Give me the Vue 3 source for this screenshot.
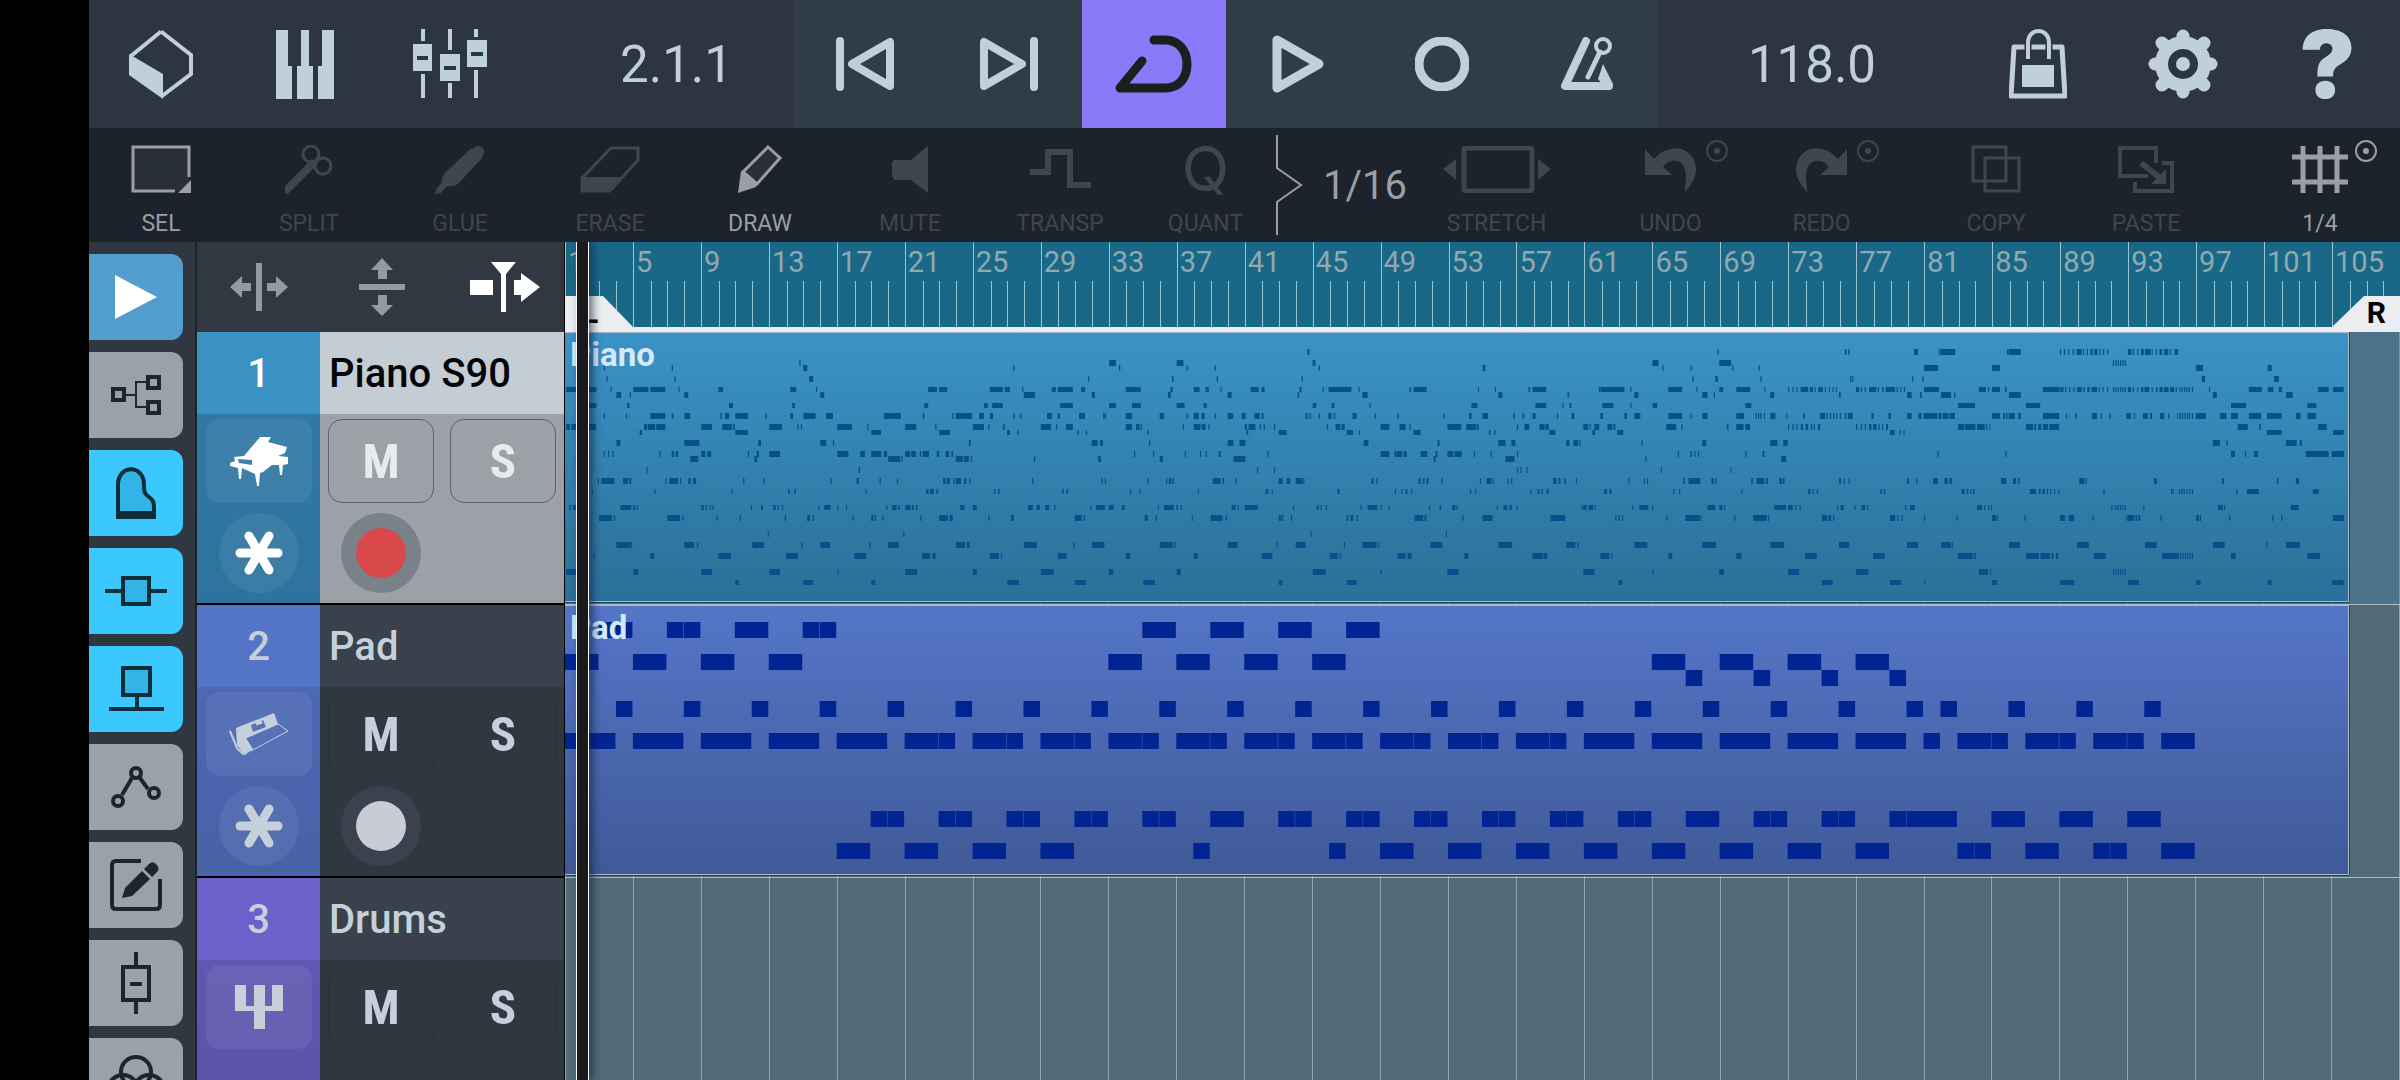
<template>
  <div class="app">
    <!-- Transport bar -->
    <header class="transport">
      <div class="section views">
        <button v-for="view in views" :key="view.icon" class="icon-btn" :aria-label="view.label">
          <Icon :name="view.icon" />
        </button>
      </div>
      <button class="readout position">2.1.1</button>
      <div class="section controls">
        <button
          v-for="control in controls"
          :key="control.icon"
          class="icon-btn"
          :class="{ on: control.icon === 'cycle' && cycle }"
          :aria-label="control.label"
          @click="control.icon === 'cycle' && (cycle = !cycle)"
        >
          <Icon :name="control.icon" />
        </button>
      </div>
      <button class="readout">118.0</button>
      <div class="section views">
        <button class="icon-btn" aria-label="Shop"><Icon name="bag" /></button>
        <button class="icon-btn" aria-label="Setup"><Icon name="gear" /></button>
        <button class="icon-btn help">?</button>
      </div>
    </header>

    <!-- Edit tools -->
    <nav class="tools">
      <template v-for="tool in tools" :key="tool.label">
        <button class="tool" :class="{ enabled: tool.enabled }">
          <span class="tool-icon">
            <span v-if="tool.letter" class="letter">{{ tool.letter }}</span>
            <Icon v-else :name="tool.icon" />
          </span>
          <span>{{ tool.label }}</span>
          <Icon v-if="tool.menu" name="more" class="more" />
        </button>
        <button v-if="tool.letter" class="quant-value">
          <svg class="notch" width="27" height="100" viewBox="0 0 27 100">
            <path d="M1 0V33L25 50L1 67V100" fill="none" stroke="currentColor" stroke-width="2" />
          </svg>
          1/16
        </button>
        <span v-if="tool.gap"></span>
      </template>
    </nav>

    <main class="workspace">
      <!-- Inspector rail -->
      <aside class="rail">
        <button
          v-for="item in rail"
          :key="item.icon"
          class="rail-btn"
          :class="item.state"
          :aria-label="item.label"
        >
          <Icon :name="item.icon" />
        </button>
      </aside>

      <!-- Track list -->
      <section class="track-list">
        <div class="list-head">
          <button class="icon-btn" aria-label="Zoom width"><Icon name="splitH" /></button>
          <button class="icon-btn" aria-label="Zoom height"><Icon name="splitV" /></button>
          <button class="icon-btn follow" aria-label="Autoscroll"><Icon name="follow" /></button>
        </div>
        <article
          v-for="(track, i) in tracks"
          :key="track.name"
          class="track"
          :class="[track.color, { selected: i === 0 }]"
        >
          <div class="number">{{ i + 1 }}</div>
          <h2 class="name">{{ track.name }}</h2>
          <div class="instrument">
            <button class="pill" aria-label="Instrument"><Icon :name="track.icon" /></button>
            <button v-if="track.clip" class="disc" aria-label="Freeze"><Icon name="freeze" /></button>
          </div>
          <div class="mix">
            <button class="pill letter-btn">M</button>
            <button class="pill letter-btn">S</button>
            <button v-if="track.clip" class="disc rec" aria-label="Record enable">
              <span class="dot"></span>
            </button>
          </div>
        </article>
      </section>

      <!-- Arrangement -->
      <section class="arrange">
        <div class="ruler">
          <div v-for="bar in markers" :key="bar" class="marker">
            <span class="bar-number">{{ bar }}</span>
            <i></i><i></i><i></i>
          </div>
          <div class="locator left">L</div>
          <div class="locator right">R</div>
        </div>
        <div class="lanes">
          <div class="bar-lines">
            <span v-for="bar in markers" :key="bar"></span>
          </div>
          <div
            v-for="(track, i) in tracks"
            :key="track.name"
            class="lane"
            :class="[track.color, { selected: i === 0 }]"
          >
            <div v-if="track.clip" class="clip">
              <svg :viewBox="track.clip.viewBox" preserveAspectRatio="none">
                <path :d="track.clip.path" />
              </svg>
              <span class="clip-name">{{ track.clip.name }}</span>
            </div>
          </div>
        </div>
        <div class="playhead"></div>
      </section>
    </main>
  </div>
</template>

<script setup>
import { h, ref } from 'vue'

const line = (w, rest = '') => `fill="none" stroke="currentColor" stroke-width="${w}" ${rest}`
const round = 'stroke-linecap="round" stroke-linejoin="round"'
const undoPath = '<path d="M0 3V29H27L18 21C24 12 40 11 41 29C41 36 40 41 40 46C47 38 51 31 51 22C49 1 25 -5 9 13Z"'

// name: [width, height, markup]
const icons = {
  cube: [64, 70, `<path d="M32 2.500L62 26V45L33 67M2 27L32 2.500" ${line(4)}/><path d="M0 25L34 45V70L0 46Z"/>`],
  keys: [58, 69, '<path d="M0 0H12V36H16V69H0ZM25 0H33V36H37V69H21V36H25ZM46 0H58V69H42V36H46Z"/>'],
  mixer: [74, 70, '<path d="M8 0h4v12h-4zM8 45h4v24h-4zM35 0h4v21h-4zM35 54h4v15h-4zM61 0h4v8h-4zM61 41h4v28h-4z"/><path fill-rule="evenodd" d="M0 15H19V42H0ZM4 27V31H15V27ZM27 25H47V52H27ZM31 37V41H43V37ZM54 11H74V38H54ZM58 23V27H70V23Z"/>'],
  prev: [58, 54, `<path d="M4 4V50" ${line(8, round)}/><path d="M16 27L54 5V49Z" ${line(8, round)}/>`],
  next: [58, 54, `<path d="M54 4V50" ${line(8, round)}/><path d="M42 27L4 5V49Z" ${line(8, round)}/>`],
  cycle: [77, 58, `<path d="M39 5H50C64 5 72 16 72 29C72 43 64 53 50 53H5L27 26" ${line(9, round)}/>`],
  play: [52, 58, `<path d="M5 5V53L47 29Z" ${line(9, round)}/>`],
  record: [54, 54, `<circle cx="27" cy="27" r="23" ${line(9)}/>`],
  metronome: [54, 54, `<path d="M26 4L5 49H49" ${line(8, round)}/><path d="M49 53L53 47L43 27L38 42L44 49Z"/><path d="M28 40L40 15" ${line(5, round)}/><circle cx="43" cy="9" r="7" ${line(4)}/>`],
  bag: [58, 70, `<path d="M5 18H53L56 67H2Z" ${line(5, round)}/><path d="M13 36H45V58H13Z"/><path d="M19 29V14C19 -2 40 -2 40 14V29" fill="none" stroke="#2d3640" stroke-width="7"/><path d="M19 30V14C19 -2 40 -2 40 14V30" ${line(4)}/>`],
  gear: [70, 70, `<path d="M35 7V63M7 35H63M14 14L56 56M56 14L14 56" ${line(13, round)}/><circle cx="35" cy="35" r="28"/><circle cx="35" cy="35" r="15" fill="#2d3640"/><circle cx="35" cy="35" r="7"/>`],
  select: [60, 48, `<path d="M2 2H58V46H2Z" fill="#282f37"/><path d="M58 32V2H2V46H44" ${line(3)}/><path d="M60 35V48H47Z"/>`],
  split: [48, 49, `<circle cx="26" cy="9" r="8" ${line(3)}/><circle cx="38" cy="21" r="8" ${line(3)}/><path d="M0 41L27 14L33 19L4 48L0 49Z"/>`],
  glue: [50, 49, '<path d="M0 49L2 43L7 37Q6 32 10 28L34 5Q39 3 42 1Q50 1 49 8L47 13L23 39Q18 42 12 41L6 48Z"/>'],
  erase: [60, 47, `<path d="M31 2H58V14L30 45H2V32Z" ${line(3)}/><path d="M2 31H41L30 45H2Z"/>`],
  draw: [44, 48, `<path d="M30 2L42 13L19 39L5 27Z" fill="#282f37" stroke="currentColor" stroke-width="3"/><path d="M3 26L10 29L19 38L18 42L0 48Z"/>`],
  mute: [36, 47, '<path d="M2 14H19L36 0V47L19 34H2L0 30V17Z"/>'],
  transpose: [61, 42, `<path d="M0 24H18V4H40V37H61" ${line(6)}/>`],
  stretch: [108, 47, `<rect x="21" y="2" width="68" height="43" rx="2" ${line(5)}/><path d="M0 23L13 13V34ZM108 23L95 13V34Z"/>`],
  undo: [51, 47, `${undoPath}/>`],
  redo: [51, 47, `${undoPath} transform="matrix(-1 0 0 1 51 0)"/>`],
  copy: [50, 48, `<path d="M2 2H35V36H2ZM14 13H48V46H14Z" ${line(3)}/>`],
  paste: [56, 47, `<path d="M38 17V2H2V30H30" ${line(4)}/><path d="M44 17H54V45H17V36" ${line(4)}/><path d="M23 17L42 32" ${line(6)}/><path d="M48 23V38H33Z"/>`],
  grid: [56, 47, `<path d="M11 0V47M28 0V47M45 0V47M0 11H56M0 36H56" ${line(5)}/>`],
  more: [24, 24, `<circle cx="12" cy="12" r="10" ${line(2)}/><circle cx="12" cy="12" r="3"/>`],
  playSolid: [42, 44, '<path d="M0 0L42 22L0 44Z"/>'],
  routing: [50, 40, `<path d="M2 14H13V25H2ZM37 2H48V13H37ZM37 27H48V38H37Z" ${line(4)}/><path d="M15 20H25M35 7H25V32H35" ${line(2)}/>`],
  grand: [40, 52, `<path d="M2 49V18C2 -3 28 -3 28 18C28 26 29 27 33 30C37 33 38 35 38 40V49Z" fill="#0b2733" fill-opacity="0.12" stroke="currentColor" stroke-width="4"/><path d="M0 44H40V52H0Z"/>`],
  insert: [62, 30, `<path d="M0 15H16M46 15H62" ${line(4)}/><rect x="18" y="2" width="26" height="26" fill="#0b2733" fill-opacity="0.12" stroke="currentColor" stroke-width="4"/>`],
  send: [55, 46, `<rect x="14" y="2" width="27" height="27" fill="#0b2733" fill-opacity="0.12" stroke="currentColor" stroke-width="4"/><path d="M28 30V42M0 43H55" ${line(4)}/>`],
  automation: [50, 42, `<path d="M21 12L11 29M29 12L37 23" ${line(4)}/><circle cx="25" cy="7" r="5" ${line(4)}/><circle cx="7" cy="35" r="5" ${line(4)}/><circle cx="43" cy="27" r="5" ${line(4)}/>`],
  edit: [52, 52, `<path d="M31 2H6Q2 2 2 6V46Q2 50 6 50H46Q50 50 50 46V20" ${line(4)}/><path d="M12 39L15 29L32 12L40 20L22 37ZM34 10L39 5Q43 1 47 6Q50 10 47 13L42 18Z"/>`],
  fader: [30, 62, `<path d="M2 15H28V48H2Z" ${line(4)}/><path d="M15 0V14M15 49V62M9 32H21" ${line(4)}/>`],
  blend: [64, 52, `<circle cx="32" cy="17" r="15" ${line(4)}/><circle cx="19" cy="35" r="15" ${line(4)}/><circle cx="45" cy="35" r="15" ${line(4)}/>`],
  splitH: [58, 48, '<path d="M26 0H32V48H26ZM0 24L12 13V20H21V28H12V35ZM58 24L46 13V20H37V28H46V35Z"/>'],
  splitV: [46, 58, '<path d="M0 26H46V32H0ZM23 0L34 12H28V21H19V12H12ZM23 58L34 47H28V37H19V47H12Z"/>'],
  follow: [70, 50, '<path d="M0 18H23V33H0ZM21 0H46L36 12V50H31V12ZM44 18H51V11L70 25L51 40V33H44Z"/>'],
  concert: [58, 49, '<path fill-rule="evenodd" d="M30 0H41L38 5L57 10L55 16L48 19L58 20V27L53 28L52 38H50L49 28L42 28L33 35L30 36L29 49H27L25 37L12 31L11 42H9L8 31L0 29V26L5 24L4 20L14 19ZM8 22L9 26L22 28V23Z"/>'],
  synth: [60, 42, `<path fill-rule="evenodd" d="M7 15L45 0L49 11L17 25L24 36L16 42L8 32ZM22 12L24 19L37 14L34 7Z"/><path d="M17 25L49 11L59 18L22 38" ${line(1)}/><path d="M1 18L8 35L15 42" ${line(2)}/><path d="M27 11L33 9" ${line(3)}/>`],
  drums: [48, 44, '<path d="M0 0H11V21H19V0H30V21H37V0H48V26H30V44H19V26H0Z"/>'],
  freeze: [48, 44, `<path d="M5 22H43M14 5L34 39M34 5L14 39" ${line(9, round)}/>`]
}

function Icon({ name }) {
  const [width, height, innerHTML] = icons[name]
  return h('svg', { width, height, viewBox: `0 0 ${width} ${height}`, fill: 'currentColor', innerHTML })
}
Icon.props = ['name']

const cycle = ref(true)

const views = [
  { icon: 'cube', label: 'Media' },
  { icon: 'keys', label: 'Keyboard' },
  { icon: 'mixer', label: 'Mixer' }
]

const controls = [
  { icon: 'prev', label: 'Previous' },
  { icon: 'next', label: 'Next' },
  { icon: 'cycle', label: 'Cycle' },
  { icon: 'play', label: 'Play' },
  { icon: 'record', label: 'Record' },
  { icon: 'metronome', label: 'Metronome' }
]

const tools = [
  { icon: 'select', label: 'SEL', enabled: true },
  { icon: 'split', label: 'SPLIT' },
  { icon: 'glue', label: 'GLUE' },
  { icon: 'erase', label: 'ERASE' },
  { icon: 'draw', label: 'DRAW', enabled: true },
  { icon: 'mute', label: 'MUTE' },
  { icon: 'transpose', label: 'TRANSP' },
  { letter: 'Q', label: 'QUANT' },
  { icon: 'stretch', label: 'STRETCH', gap: true },
  { icon: 'undo', label: 'UNDO', menu: true },
  { icon: 'redo', label: 'REDO', menu: true, gap: true },
  { icon: 'copy', label: 'COPY' },
  { icon: 'paste', label: 'PASTE', gap: true },
  { icon: 'grid', label: '1/4', enabled: true, menu: true }
]

const rail = [
  { icon: 'playSolid', label: 'Play', state: 'main' },
  { icon: 'routing', label: 'Routing' },
  { icon: 'grand', label: 'Instrument', state: 'active' },
  { icon: 'insert', label: 'Insert effects', state: 'active' },
  { icon: 'send', label: 'Send effects', state: 'active' },
  { icon: 'automation', label: 'Automation' },
  { icon: 'edit', label: 'Edit' },
  { icon: 'fader', label: 'Channel' },
  { icon: 'blend', label: 'Colors' }
]

// One label every four bars
const markers = Array.from({ length: 27 }, (_, i) => i * 4 + 1)

// Piano notes, as "start:length" in ticks (43 to a bar), by pitch above the lowest note
const pianoParts = [
  {
    offset: -12,
    rows: {
      41: '605:2 1389:17',
      40: '110:2 282:2 615:10 1146:2 1414:2',
      38: '117:2 289:2 630:10 1336:2 1549:2',
      36: '15:76 127:2 185:38 228:38 299:2 400:12 582:15 647:2 931:22 959:20 1087:33 1125:13 1169:2 1244:10 1259:38 1318:10 1431:38 1544:6',
      35: '142:12 176:2 314:10 658:10 1173:28 1345:8 1538:7',
      33: '73:18 169:6 427:10 587:7 921:10 1072:10 1093:27 1265:32 1389:17 1447:22',
      31: '110:2 166:2 228:38 282:4 314:15 405:4 417:10 443:32 519:2 582:7 615:31 673:17 819:43 917:4 992:3 1001:41 1060:12 1087:8 1146:2 1164:2 1232:12 1259:5 1313:15 1374:2 1378:2 1431:16 1517:11',
      29: '15:10 28:12 72:18 212:8 222:18 243:23 357:27 410:25 438:4 529:32 600:2 609:2 701:37 777:2 873:28 949:3 1044:28 1083:2 1121:4 1216:26 1255:2 1280:17 1431:16 1457:9 1469:3',
      28: '201:6 443:32 787:25 959:27 1131:7 1157:2 1309:3 1330:2 1486:2',
      26: '142:10 314:38 501:7 658:15 690:2 1034:5 1345:15 1366:7 1490:2',
      24: '110:2 121:2 132:2 251:2 282:6 292:6 357:10 372:10 475:2 497:6 529:27 701:28 759:12 787:25 819:8 873:12 888:12 910:3 917:16 953:6 975:9 990:4 1452:2 1500:2',
      23: '329:20 491:7 830:30 863:2 1001:18 1021:13 1039:3 1199:2 1361:7 1517:8',
      21: '218:2 755:4',
      19: '95:2 104:33 159:13 175:5 266:2 276:22 303:3 324:6 336:8 463:2 514:2 684:2 750:6 808:3 852:3 969:6 978:8 995:3 1001:13 1022:5 1035:2 1194:2 1369:2 1378:2 1486:2 1533:3 1540:4 1549:4',
      17: '80:3 238:2 433:2 577:4 592:4 772:2 926:6 936:9 952:4 1098:3 1108:4 1270:4 1281:4 1442:2 1465:3',
      14: '23:4 32:8 152:28 184:6 194:3 357:6 368:2 378:2 385:2 482:2 508:5 539:6 550:3 561:2 653:2 668:16 701:2 723:3 825:2 840:11 855:4 873:14 890:5 900:4 1012:11 1044:10 1184:12 1205:9 1227:10 1250:2 1341:2 1356:22 1388:12 1421:7 1512:3 1528:25',
      12: '98:33 136:3 271:32 309:2 395:2 454:2 568:2 625:7 639:3 739:2 787:6 796:3 815:2 911:2 959:22 985:8 1083:2 1141:7 1302:18 1325:3 1479:8 1507:3',
      9: '525:2 868:2',
      7: '142:36 179:3 314:25 346:3 486:30 610:2 658:25 782:2 830:27 1001:23 1029:7 1173:33 1298:2 1345:32 1517:33',
      5: '84:2 228:10 400:32 572:30 744:30 916:20 942:8 1087:23 1115:3 1259:22 1431:11',
      2: '15:25 185:12 357:27 529:27 701:2 873:30 1044:10 1216:33 1388:11',
      0: '443:9 615:25 787:10 1131:30 1302:28 1475:30'
    }
  },
  {
    offset: 1530,
    rows: {
      43: '349:5 1386:2',
      41: '18:17 362:7 1222:15 1391:30',
      40: '43:2 114:2 377:2 792:7 1247:2 1318:2 1424:2 1490:2',
      38: '6:2 119:2 334:2 1323:2 1381:6 1495:2',
      36: '2:6 61:15 91:8 129:2 205:20 233:7 329:5 387:2 402:58 478:3 607:4 617:33 780:2 823:2 908:4 918:35 1086:2 1090:61 1166:2 1262:35 1333:2 1391:10 1434:35 1505:2',
      35: '0:3 147:10 324:4 488:13 832:10 1007:4 1176:10 1348:13 1377:3 1520:10',
      33: '18:20 86:8 362:9 410:7 506:2 764:15 926:27 994:2 1012:5 1095:28 1166:2 1222:12 1457:15',
      31: '43:2 61:13 81:8 114:2 147:14 182:10 215:13 233:5 344:5 354:2 377:2 402:8 415:4 463:10 519:2 577:2 693:2 758:6 792:14 870:4 893:4 918:8 980:2 1017:7 1090:7 1151:6 1176:15 1262:35 1318:2 1348:13 1434:20 1483:3 1489:3 1495:2 1504:2 1520:13',
      29: '33:2 61:17 81:10 98:2 190:6 200:17 228:2 238:2 264:2 398:3 420:12 435:8 534:22 582:15 607:2 703:35 751:25 778:4 879:2 898:12 936:13 951:8 1047:12 1063:3 1075:12 1108:12 1123:5 1257:25 1295:2 1410:4 1434:18 1457:12',
      28: '195:4 276:20 448:16 478:3 617:18 808:4 822:3 961:15 1070:7 1133:15',
      26: '147:14 177:15 491:12 678:5 832:18 865:10 1004:8 1022:12 1037:2 1194:2 1348:10 1520:18 1553:7',
      24: '38:2 77:2 91:3 124:5 248:2 534:22 569:4 574:15 592:8 635:17 673:5 703:15 721:18 770:2 812:2 879:2 1286:2 1318:4 1328:2 1337:2 1457:2 1500:5',
      23: '162:30 668:5 850:23 1204:2 1548:12',
      21: '221:2 264:2 879:2 888:2 903:2 1243:2 1419:2',
      19: '0:4 7:3 109:20 134:4 167:2 276:10 296:9 319:17 338:3 511:5 523:2 630:5 641:4 650:5 688:2 785:2 802:12 817:3 855:2 864:2 971:8 984:5 999:4 1028:2 1161:2 1200:2 1208:2 1300:4 1313:30 1371:6 1381:3 1472:4 1485:20 1509:5 1543:7 1552:4',
      17: '71:2 243:7 258:2 425:5 570:2 586:3 597:5 611:3 760:2 773:3 913:3 931:5 941:4 954:5 1100:7 1113:5 1275:2 1289:2 1447:2',
      14: '0:10 17:4 28:2 157:10 172:3 190:33 312:2 372:5 382:2 395:2 483:3 501:25 534:2 554:2 656:2 683:4 715:8 726:2 828:2 845:10 860:6 878:2 1042:3 1047:8 1060:12 1075:2 1171:2 1189:22 1221:2 1361:20 1391:8 1403:3 1530:30',
      12: '56:2 104:30 142:3 276:7 285:2 307:2 448:4 458:7 473:2 620:22 645:5 741:3 792:25 964:37 1128:3 1136:4 1145:3 1257:2 1305:36 1343:2 1429:2 1477:34 1514:3',
      9: '357:2 699:2',
      7: '0:8 12:3 147:25 271:2 319:25 441:2 488:36 528:3 660:30 832:35 1004:23 1032:2 1176:33 1348:35 1520:35',
      5: '61:10 233:27 405:20 430:3 577:20 602:10 746:10 918:26 946:10 1090:23 1118:2 1262:10 1434:13',
      2: '18:10 362:33 534:2 703:28 1047:28 1222:2 1391:12',
      0: '276:9 448:25 1136:9'
    }
  },
  {
    offset: 3075,
    rows: {
      43: '164:4 172:3 339:10 402:3 406:37 574:3 578:31 708:3 718:2 729:2 740:2 750:13 766:2 776:2 785:6 795:8 808:2 817:2 828:2 880:9 892:2 903:2 913:7 923:14 940:2 951:2 960:7 972:10 986:3 998:9',
      41: '842:2 848:2 854:2 860:2 866:2 872:2',
      40: '364:36 536:20 1052:18 1234:10',
      38: '177:2 182:3 334:2 360:2 1067:8 1250:12',
      36: '20:3 31:2 41:3 52:19 75:8 87:3 96:12 113:2 123:2 132:2 141:2 192:8 204:2 214:2 225:18 247:3 258:4 267:24 295:2 304:2 313:2 364:38 503:18 526:3 536:20 569:4 665:42 709:8 721:3 731:3 742:3 751:12 767:4 777:6 788:14 806:3 816:3 827:3 842:2 848:2 854:2 860:2 866:2 872:2 880:8 892:3 903:3 913:6 922:12 940:3 951:4 960:8 971:12 987:10 1001:3 1010:2 1016:2 1022:2 1028:2 1034:2 1042:2 1085:2 1186:33 1234:14 1262:8 1361:27 1399:27',
      35: '149:4 321:12 354:4 407:25 440:2 579:30 1095:10 1280:17',
      33: '450:43 622:36 1141:38 1334:23',
      31: '15:3 58:4 101:13 118:2 126:2 134:2 142:2 151:2 163:4 171:13 231:6 274:6 321:12 350:8 363:34 400:8 411:15 429:13 536:20 564:4 571:4 578:16 602:7 665:41 723:2 746:4 789:13 811:2 833:2 876:11 895:3 918:12 936:5 961:11 982:2 1005:2 1011:2 1017:2 1023:2 1029:2 1035:2 1042:2 1052:25 1113:16 1141:17 1186:31 1232:37 1305:12 1334:22',
      29: '20:3 31:2 41:3 52:6 64:7 78:2 85:3 96:5 192:3 204:2 214:3 225:6 235:9 249:3 258:3 268:5 450:16 468:26 498:20 521:3 529:2 622:18 643:5 653:8 665:13 681:25 1158:25 1212:4 1361:22',
      28: '278:12 302:3 312:3 1232:37 1399:27',
      26: '10:9 1095:18 1129:2 1280:27 1315:5',
      24: '398:2 570:2 1141:10 1176:3 1199:10 1330:58 1396:31',
      19: '149:5 161:2 173:3 321:5 344:3 387:12 416:8 428:7 559:13 589:8 602:4 757:13 773:3 946:7 1118:5 1257:4 1305:8',
      17: '71:6 82:3 93:3 253:4 262:4 459:8 472:4 481:3 488:4 632:15 655:4 664:6 675:3 683:3 693:3 704:3 818:2 989:2 993:3 1009:2 1015:2 1021:2 1028:2 1035:2 1042:2 1154:3 1181:30 1348:15',
      14: '20:12 38:3 49:2 144:3 153:8 188:2 206:9 220:3 316:3 329:12 498:13 516:3 526:3 533:2 838:2 848:2 854:2 860:2 866:2 872:2 919:3 1108:12 1123:2 1292:20',
      12: '106:13 122:7 134:3 278:13 296:3 307:3 364:2 446:2 536:10 548:3 618:2 708:13 730:14 790:2 876:3 880:16 899:4 906:5 962:2 1052:8 1062:2 1136:2 1245:2 1268:2 1399:28',
      7: '149:26 321:28 407:25 434:3 579:28 751:30 923:30 1095:30 1230:2 1280:35',
      5: '63:30 235:30 450:37 490:5 622:33 659:24 687:5 698:5 794:30 966:43 1012:2 1018:2 1024:2 1030:2 1036:2 1042:2 1141:12 1334:32',
      2: '20:28 192:31 503:23 531:2 842:2 848:2 854:2 860:2 866:2 872:2',
      0: '106:27 278:28 364:2 536:13 708:36 880:28 1052:12 1234:10 1396:30'
    }
  }
]

// Pad notes, as "start-end" in bars
const padRows = {
  14: '2-3 3-4 6-7 7-8 10-12 14-15 15-16 34-36 38-40 42-44 46-48',
  12: '0-2 4-6 8-10 12-14 32-34 36-38 40-42 44-46 64-66 68-70 72-74 76-78',
  11: '66-67 70-71 74-75 78-79',
  9: '3-4 7-8 11-12 15-16 19-20 23-24 27-28 31-32 35-36 39-40 43-44 47-48 51-52 55-56 59-60 63-64 67-68 71-72 75-76 79-80 81-82 85-86 89-90 93-94',
  7: '0-3 4-7 8-11 12-15 16-19 20-22 22-23 24-26 26-27 28-30 30-31 32-34 34-35 36-38 38-39 40-42 42-43 44-46 46-47 48-50 50-51 52-54 54-55 56-58 58-59 60-63 64-67 68-71 72-75 76-79 80-81 82-84 84-85 86-88 88-89 90-92 92-93 94-96',
  2: '18-19 19-20 22-23 23-24 26-27 27-28 30-31 31-32 34-35 35-36 38-40 42-43 43-44 46-47 47-48 50-51 51-52 54-55 55-56 58-59 59-60 62-63 63-64 66-68 70-71 71-72 74-75 75-76 78-79 79-82 84-86 88-90 92-94',
  0: '16-18 20-22 24-26 28-30 37-38 45-46 48-50 52-54 56-58 60-62 64-66 68-70 72-74 76-78 82-83 83-84 86-88 90-91 91-92 94-96'
}

function pianoPath() {
  let d = ''
  for (const { offset, rows } of pianoParts) {
    for (const [pitch, notes] of Object.entries(rows)) {
      const top = 246.7 - pitch * 5.364
      const y = Math.round(top)
      const bottom = Math.ceil(top + 5.3)
      for (const note of notes.split(' ')) {
        const [x, length] = note.split(':').map(Number)
        const w = Math.max(length, 3)
        d += `M${x + offset} ${y}h${w}V${bottom}h${-w}z`
      }
    }
  }
  return d
}

function padPath() {
  let d = ''
  for (const [pitch, notes] of Object.entries(padRows)) {
    const y = 237 - Math.round(pitch * 15.75)
    for (const note of notes.split(' ')) {
      const [start, end] = note.split('-').map(Number)
      const w = (end - start) * 17 - 0.5
      d += `M${start * 17} ${y}h${w}v16h${-w}z`
    }
  }
  return d
}

const tracks = [
  {
    name: 'Piano S90',
    color: 'blue',
    icon: 'concert',
    clip: { name: 'Piano', viewBox: '0 0 4512 268', path: pianoPath() }
  },
  {
    name: 'Pad',
    color: 'indigo',
    icon: 'synth',
    clip: { name: 'Pad', viewBox: '0 0 1785 268', path: padPath() }
  },
  { name: 'Drums', color: 'violet', icon: 'drums' }
]
</script>

<style>
body {
  margin: 0;
  background: #000;
}
</style>

<style scoped>
.app {
  box-sizing: border-box;
  display: flex;
  flex-direction: column;
  height: 100vh;
  border-left: 89px solid #000;
  overflow: hidden;
  background: #1c232c;
  font-family: Roboto, 'Liberation Sans', sans-serif;
}

button {
  margin: 0;
  padding: 0;
  border: 0;
  background: none;
  color: inherit;
  font: inherit;
  cursor: pointer;
}

.icon-btn {
  display: flex;
  align-items: center;
  justify-content: center;
}

/* Transport bar */
.transport {
  display: grid;
  grid-template-columns: 433fr 271fr 866fr 306fr 435fr;
  flex: none;
  height: 128px;
  background: #2d3640;
  color: #bfd0dc;
}

.section {
  display: grid;
  grid-auto-flow: column;
  grid-auto-columns: 1fr;
}

.controls {
  background: #303c46;
}

.controls .on {
  background: #8a79f8;
  color: #1c1f20;
}

.readout {
  font-size: 51px;
  font-weight: 400;
}

.position {
  padding-left: 38px;
}

.help {
  font-family: Inter, Roboto, sans-serif;
  font-size: 94px;
  font-weight: 900;
  line-height: 1;
}

/* Edit tools */
.tools {
  display: grid;
  grid-template-columns: 144fr 152fr repeat(5, 150fr) 141fr 144fr 153fr 22fr 151fr 151fr 24fr 150fr 150fr 24fr 150fr 5fr;
  grid-template-rows: 114px;
  flex: none;
  color: #3f464e;
}

.tool {
  position: relative;
  display: flex;
  flex-direction: column;
  align-items: center;
  gap: 19px;
  padding-top: 17px;
  font-size: 23px;
  line-height: 24px;
}

.tool.enabled {
  color: #9a9fa5;
}

.tool-icon {
  display: flex;
  align-items: center;
  justify-content: center;
  height: 48px;
}

.letter {
  font-family: Inter, Roboto, sans-serif;
  font-size: 62px;
  font-weight: 400;
  line-height: 48px;
}

.more {
  position: absolute;
  top: 11px;
  left: calc(50% + 34px);
}

.quant-value {
  position: relative;
  padding-left: 34px;
  color: #9a9fa5;
  font-size: 40px;
}

.notch {
  position: absolute;
  top: 7px;
  left: 0;
}

/* Workspace */
.workspace {
  display: grid;
  grid-template-columns: 106px 368px 1fr;
  column-gap: 2px;
  flex: 1;
  min-height: 0;
}

.rail {
  display: flex;
  flex-direction: column;
  gap: 12px;
  min-height: 0;
  padding: 12px 12px 0 0;
  overflow: hidden;
  background: #2f3841;
}

.rail-btn {
  display: flex;
  align-items: center;
  justify-content: center;
  flex: none;
  height: 86px;
  border-radius: 0 12px 12px 0;
  background: #98a2a7;
  color: #1b272d;
}

.rail-btn.main {
  background: #529dcb;
  color: #fff;
}

.rail-btn.active {
  background: #3ac8ff;
  color: #102e3a;
}

/* Track list */
.track-list {
  min-height: 0;
  overflow: hidden;
  border-right: 1px solid #000;
  background: #313841;
}

.list-head {
  display: grid;
  grid-template-columns: repeat(3, 123px);
  height: 90px;
  color: #939aa1;
}

.follow {
  color: #fff;
}

.track {
  display: grid;
  grid-template-columns: 123px 1fr;
  grid-template-rows: 82px 189px;
  border-bottom: 2px solid #000;
  color: #c5d0da;
}

.number,
.name {
  margin: 0;
  font-size: 40px;
  font-weight: 500;
  line-height: 84px;
}

.number {
  background: var(--head);
  text-align: center;
}

.name {
  padding-left: 9px;
  background: #38414c;
}

.instrument,
.mix {
  display: grid;
  grid-template-rows: 94px 90px;
  place-items: center;
}

.instrument {
  background: var(--body);
}

.mix {
  grid-template-columns: 1fr 1fr;
  background: #2f3841;
}

.pill {
  display: flex;
  align-items: center;
  justify-content: center;
  box-sizing: border-box;
  width: 106px;
  height: 84px;
  border-radius: 14px;
}

.instrument .pill,
.instrument .disc {
  background: rgba(255, 255, 255, 0.07);
}

.letter-btn {
  border: 1px solid #2a323b;
  font-family: 'Liberation Sans Narrow', 'Roboto Condensed', Roboto, sans-serif;
  font-size: 49px;
  font-weight: 700;
}

.disc {
  display: flex;
  align-items: center;
  justify-content: center;
  width: 80px;
  height: 80px;
  border-radius: 50%;
}

.rec {
  background: #3a434d;
}

.dot {
  width: 50px;
  height: 50px;
  border-radius: 50%;
  background: #c9cbd5;
}

.blue {
  --head: #3a91c3;
  --body: linear-gradient(#3078a6, #2d739d);
  --clip: linear-gradient(#3a93c6, #2b7098);
  --note: #07508a;
}

.indigo {
  --head: #5474c8;
  --body: linear-gradient(#4c68b6, #4862a8);
  --clip: linear-gradient(#5575c8, #405a98);
  --note: #002593;
}

.violet {
  --head: #6c61ca;
  --body: linear-gradient(#5f57b1, #5951a8);
}

.track.selected {
  color: #fff;
}

.selected .name {
  background: #c4cdd3;
  color: #05060a;
}

.selected .mix {
  background: #9ca1a8;
  color: #e8eaec;
}

.selected .letter-btn {
  border-color: #5c606c;
}

.selected .rec {
  background: #798288;
}

.selected .dot {
  background: #d9484b;
}

/* Arrangement */
.arrange {
  position: relative;
  display: flex;
  flex-direction: column;
  min-width: 0;
  min-height: 0;
  margin-left: -2px;
  overflow: hidden;
}

.ruler {
  position: relative;
  display: grid;
  grid-template-columns: repeat(27, minmax(0, 1fr));
  flex: none;
  box-sizing: border-box;
  height: 90px;
  border-bottom: 5px solid #ebedf1;
  background: #1a6887;
}

.marker {
  display: grid;
  grid-template-columns: repeat(4, minmax(0, 1fr));
  grid-template-rows: 39px 1fr;
  border-left: 1px solid #9cc4d2;
}

.marker i {
  grid-row: 2;
  border-left: 1px solid #9cc4d2;
}

.marker i:nth-of-type(1) {
  grid-column: 2;
}

.marker i:nth-of-type(2) {
  grid-column: 3;
}

.marker i:nth-of-type(3) {
  grid-column: 4;
}

.bar-number {
  grid-row: 1;
  grid-column: 1 / 5;
  padding-left: 2px;
  color: #90a9b0;
  font-size: 29px;
  line-height: 40px;
}

.locator {
  position: absolute;
  bottom: 0;
  box-sizing: border-box;
  width: 68px;
  height: 31px;
  background: #ebedf1;
  color: #000;
  font-size: 30px;
  font-weight: 700;
  line-height: 34px;
}

.left {
  left: 0;
  padding-left: 17px;
  clip-path: polygon(0 0, 38px 0, 100% 100%, 0 100%);
}

.right {
  right: 0;
  padding-right: 14px;
  clip-path: polygon(32px 0, 100% 0, 100% 100%, 0 100%);
  text-align: right;
}

.lanes {
  position: relative;
  flex: 1;
  min-height: 0;
  background: #516c78;
}

.bar-lines {
  position: absolute;
  inset: 0;
  display: grid;
  grid-template-columns: repeat(27, minmax(0, 1fr));
  border-right: 1px solid #8faab2;
}

.bar-lines span {
  border-left: 1px solid #8faab2;
}

.lane {
  position: relative;
  box-sizing: border-box;
  height: 273px;
  border-bottom: 1px solid #a9bfc5;
}

.lane.selected {
  background: rgba(65, 130, 170, 0.35);
}

.clip {
  position: relative;
  box-sizing: border-box;
  width: calc(100% * 105 / 108);
  height: 270px;
  border: solid #a5bccb;
  border-width: 1px 1px 1px 0;
  background: var(--clip);
  box-shadow: 0 1px 0 #24445c, 1px 0 0 #24445c;
}

.clip svg {
  display: block;
  width: 100%;
  height: 100%;
  fill: var(--note);
}

.clip-name {
  position: absolute;
  top: 3px;
  left: 5px;
  color: #d5e9fb;
  font-size: 33px;
  font-weight: 700;
  line-height: 38px;
}

.playhead {
  position: absolute;
  top: 0;
  bottom: 0;
  left: 11px;
  box-sizing: border-box;
  width: 13px;
  border: solid #fff;
  border-width: 0 1px;
  background: #1a1a1d;
  box-shadow: 4px 0 8px rgba(10, 30, 60, 0.6);
}
</style>
